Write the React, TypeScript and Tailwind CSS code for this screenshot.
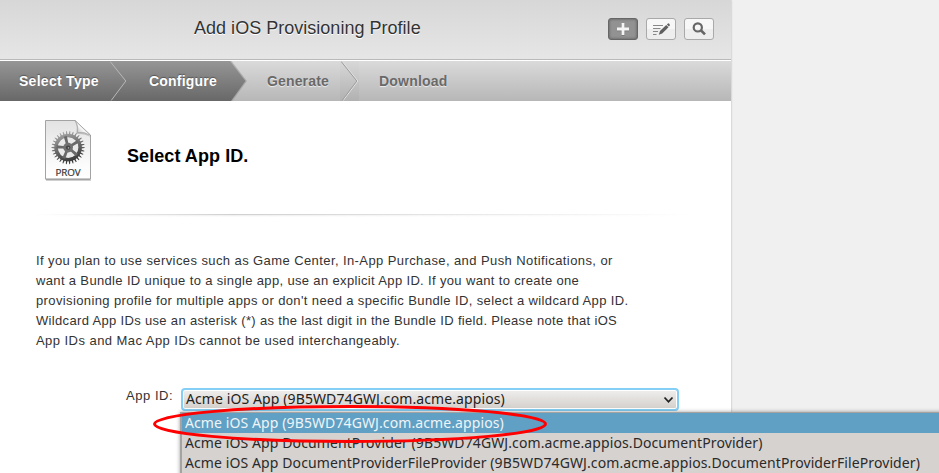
import React from "react";

const paragraph = [
  { text: "If you plan to use services such as Game Center, In-App Purchase, and Push Notifications, or", cls: "tracking-[0.41px]" },
  { text: "want a Bundle ID unique to a single app, use an explicit App ID. If you want to create one", cls: "tracking-[0.35px]" },
  { text: "provisioning profile for multiple apps or don't need a specific Bundle ID, select a wildcard App ID.", cls: "tracking-[0.38px]" },
  { text: "Wildcard App IDs use an asterisk (*) as the last digit in the Bundle ID field. Please note that iOS", cls: "tracking-[0.33px]" },
  { text: "App IDs and Mac App IDs cannot be used interchangeably.", cls: "tracking-[0.45px]" },
];

const options = [
  "Acme iOS App (9B5WD74GWJ.com.acme.appios)",
  "Acme iOS App DocumentProvider (9B5WD74GWJ.com.acme.appios.DocumentProvider)",
  "Acme iOS App DocumentProviderFileProvider (9B5WD74GWJ.com.acme.appios.DocumentProviderFileProvider)",
];

// Outline of the gear's toothed rim, centred on the origin.
function gearPoints(teeth: number, inner: number, outer: number) {
  const pts: string[] = [];
  for (let i = 0; i < teeth; i++) {
    const step = (Math.PI * 2) / teeth;
    const a = i * step;
    [
      [a - step * 0.3, inner],
      [a - step * 0.08, outer],
      [a + step * 0.14, outer],
      [a + step * 0.3, inner],
    ].forEach(([t, r]) => pts.push(`${(Math.cos(t) * r).toFixed(2)},${(Math.sin(t) * r).toFixed(2)}`));
  }
  return pts.join(" ");
}

function ProvIcon() {
  return (
    <svg width="52" height="66" viewBox="0 0 52 66" className="block">
      <defs>
        <linearGradient id="paper" x1="0" y1="0" x2="0" y2="1">
          <stop offset="0" stopColor="#e2e2e2" />
          <stop offset="0.75" stopColor="#fbfbfb" />
          <stop offset="1" stopColor="#ffffff" />
        </linearGradient>
        <linearGradient id="gear" gradientUnits="userSpaceOnUse" x1="-6" y1="-16" x2="5" y2="16">
          <stop offset="0" stopColor="#a8a8a8" />
          <stop offset="0.5" stopColor="#6a6a6a" />
          <stop offset="1" stopColor="#303030" />
        </linearGradient>
        <linearGradient id="fold" x1="0" y1="1" x2="0.7" y2="0.3">
          <stop offset="0" stopColor="#aaa" />
          <stop offset="0.7" stopColor="#fff" />
        </linearGradient>
      </defs>
      <path d="M3 62.3H48" stroke="#000" strokeOpacity="0.18" strokeWidth="1.4" />
      <path d="M2.5 2.5H32L47.5 17V61.2H2.5Z" fill="url(#paper)" stroke="#a3a3a3" />
      <path d="M3 61.2H47" stroke="#999" />
      <path d="M31.5 2.5Q35 8 33 16Q42 15.5 47.5 19Z" fill="#999" fillOpacity="0.5" />
      <path d="M32 2.5Q35.5 7 34.5 14.5Q42 13.5 47.5 17.5Z" fill="url(#fold)" stroke="#999" strokeWidth="0.6" />
      <g transform="translate(25.1 29.6)">
        <polygon points={gearPoints(30, 13.3, 16.6)} fill="url(#gear)" />
        <circle r="10.8" fill="#e9e9e9" />
        <circle r="12" fill="none" stroke="url(#gear)" strokeWidth="3.4" />
        {[40, 112, 184, 256, 328].map((a) => (
          <path key={a} d="M0 -3L5 -1.3L11.5 -1.6V1.6L5 1.3L0 3Z" fill="#696969" transform={`rotate(${a})`} />
        ))}
        <circle r="4.8" fill="#707070" />
        <circle r="2.2" fill="#444" />
        <circle cx="0.4" cy="0.3" r="0.8" fill="#aaa" />
      </g>
      <text x="25" y="58" textAnchor="middle" fontSize="9.8" fontWeight="500" fill="#333" stroke="#333" strokeWidth="0.2" fontFamily="'Open Sans', sans-serif" textLength="25">
        PROV
      </text>
    </svg>
  );
}

function HeaderButtons() {
  return (
    <div className="flex gap-2">
      <button className="flex h-[22px] w-[30px] items-center justify-center rounded-[3px] border border-[#666] bg-[#929292] shadow-[inset_0_0_3px_#555]">
        <svg width="14" height="14" viewBox="0 0 14 14">
          <path d="M7 1.7V13.7M1 7.7H13" stroke="#555" strokeOpacity="0.5" strokeWidth="3" />
          <path d="M7 1V13M1 7H13" stroke="#f4f4f4" strokeWidth="2.8" />
        </svg>
      </button>
      <button className="flex h-[22px] w-[30px] items-center justify-center rounded-[3px] border border-[#a9a9a9] bg-linear-to-b from-[#f7f7f7] from-50% to-[#eeeeee] to-50%">
        <svg width="18" height="14" viewBox="0 0 18 14">
          <path d="M1 3.5H11M1 6.5H8.5M1 9.5H6M1 12.5H4.5" stroke="#888" />
          <path d="M6.8 12.8L8 9.1L14.2 3L16.5 5.3L10.2 11.6Z" fill="#5f5f5f" />
          <path d="M14.9 2.5L16.2 1.3Q17.4 1.5 18 3.2L16.9 4.5Z" fill="#5f5f5f" />
        </svg>
      </button>
      <button className="flex h-[22px] w-[30px] items-center justify-center rounded-[3px] border border-[#a9a9a9] bg-linear-to-b from-[#f7f7f7] from-50% to-[#eeeeee] to-50%">
        <svg width="14" height="14" viewBox="0 0 14 14">
          <circle cx="5.8" cy="5.4" r="4.1" fill="none" stroke="#666" strokeWidth="2.2" />
          <path d="M8.8 8.3L13 12.4" stroke="#666" strokeWidth="2.6" />
        </svg>
      </button>
    </div>
  );
}

function Chevron({ light }: { light?: boolean }) {
  return (
    <svg width="18" height="40" viewBox="0 0 18 40" className="block shrink-0">
      {light && <path d="M1.2 0.5L16.8 20L2.2 39.5" fill="none" stroke="#e4e4e4" strokeWidth="1" />}
      <path d="M0.2 0.5L15.8 20L1.2 39.5" fill="none" stroke={light ? "#9c9c9c" : "#b8b8b8"} strokeWidth="1" />
    </svg>
  );
}

function Steps() {
  return (
    <div className="flex h-10 shrink-0 bg-linear-to-b from-[#dadada] to-[#b7b7b7] text-[14px] leading-[40px] font-bold whitespace-nowrap">
      <div className="flex w-[248px] shrink-0">
        <div className="flex w-[230px] shrink-0 bg-linear-to-b from-[#969696] to-[#686868] text-white [text-shadow:0_-1px_1px_#555]">
          <div className="w-[110px] shrink-0 pl-[19px] tracking-[0.28px]">Select Type</div>
          <Chevron />
          <div className="pl-[21px] tracking-[0.2px]">Configure</div>
        </div>
        <svg width="18" height="40" viewBox="0 0 18 40" className="block shrink-0">
          <defs>
            <linearGradient id="tip" x1="0" y1="0" x2="0" y2="1">
              <stop offset="0" stopColor="#969696" />
              <stop offset="1" stopColor="#686868" />
            </linearGradient>
          </defs>
          <path d="M0.5 0L16 20L1.5 40" fill="none" stroke="#888" strokeOpacity="0.45" strokeWidth="1.5" />
          <path d="M0 0L15.5 20L1 40H0Z" fill="url(#tip)" />
        </svg>
      </div>
      <div className="flex text-[#696969] [text-shadow:0_1px_1px_#eee]">
        <div className="w-[92px] shrink-0 pl-[19px] tracking-[0.15px]">Generate</div>
        <div className="w-[19px] shrink-0 bg-linear-to-b from-[#d8d8d8] to-[#b1b1b1] pl-px">
          <Chevron light />
        </div>
        <div className="pl-5 tracking-[0.2px]">Download</div>
      </div>
    </div>
  );
}

export default function App() {
  return (
    <div className="relative h-[473px] w-[939px] overflow-hidden bg-[#f0f0f0] font-['Liberation_Sans',Arial,sans-serif] text-[#333]">
      <main className="flex h-full w-[731px] flex-col bg-white shadow-[0_0_2px_#aaa]">
        <header className="flex h-[61px] shrink-0 items-start justify-between border-b border-white bg-linear-to-b from-[#d7d7d7] to-[#e6e6e6] pr-[17px] pl-[194px] shadow-[inset_0_-1px_0_#b9b9b9]">
          <h1 className="pt-[14px] text-[18px] leading-7 tracking-[0.02px] whitespace-nowrap [text-shadow:0_1px_0_#fff]">Add iOS Provisioning Profile</h1>
          <div className="pt-[18px]">
            <HeaderButtons />
          </div>
        </header>
        <Steps />
        <section className="flex h-[113px] shrink-0 pt-[17px] pl-[43px]">
          <ProvIcon />
          <h2 className="pt-[24px] pl-8 text-[18px] leading-7 font-bold tracking-[0.07px] whitespace-nowrap text-black">Select App ID.</h2>
        </section>
        <div className="ml-[36px] h-[3px] w-[656px] shrink-0 bg-linear-to-r from-transparent via-[#d0d0d0] via-30% to-transparent to-100% [mask-image:linear-gradient(to_bottom,black_34%,rgba(0,0,0,0.4)_35%,transparent)]" />
        <p className="mt-[34px] ml-[36px] shrink-0 text-[13px] leading-5 whitespace-nowrap">
          {paragraph.map((l) => (
            <span key={l.text} className={`block ${l.cls}`}>
              {l.text}
            </span>
          ))}
        </p>
        <div className="mt-[35px] flex shrink-0 pl-[126px]">
          <label className="w-[55px] shrink-0 text-[13px] leading-5 tracking-[0.55px] whitespace-nowrap">App ID:</label>
          <div className="mt-[2px] flex h-[23px] w-[498px] items-center justify-between rounded-[4px] border-2 border-[#84cff5] bg-linear-to-b from-[#f0efee] to-[#d3cfcb] pr-[3px] pl-[3px] font-['Noto_Sans',sans-serif] text-[14px] text-[#222] shadow-[inset_0_0_0_1px_#fff]">
            <span className="-mt-px leading-5 tracking-[0.1px] whitespace-nowrap">{options[0]}</span>
            <svg width="11" height="8" viewBox="0 0 11 8">
              <path d="M1.5 1.5L5.5 5.8L9.5 1.5" fill="none" stroke="#222" strokeWidth="1.8" />
            </svg>
          </div>
        </div>
      </main>
      <ul className="absolute top-[412px] left-[180px] h-[70px] w-[770px] border border-l-2 border-[#a5a3a1] bg-[#d6d2cf] font-['Noto_Sans',sans-serif] text-[14px] leading-5 tracking-[0.1px] text-[#2a2a2a] shadow-[0_0_4px_rgba(0,0,0,0.4)]">
        {options.map((o, i) => (
          <li key={o} className={i === 0 ? "h-5 bg-[#5fa0c4] pl-[3px] whitespace-nowrap text-[#f0f4f7]" : "h-5 pl-[3px] whitespace-nowrap"}>
            {o}
          </li>
        ))}
      </ul>
      <svg width="400" height="44" viewBox="0 0 400 44" className="absolute top-[402px] left-[150px]">
        <ellipse cx="200" cy="22" rx="195.5" ry="17.5" fill="none" stroke="#f00" strokeWidth="3" />
      </svg>
    </div>
  );
}
